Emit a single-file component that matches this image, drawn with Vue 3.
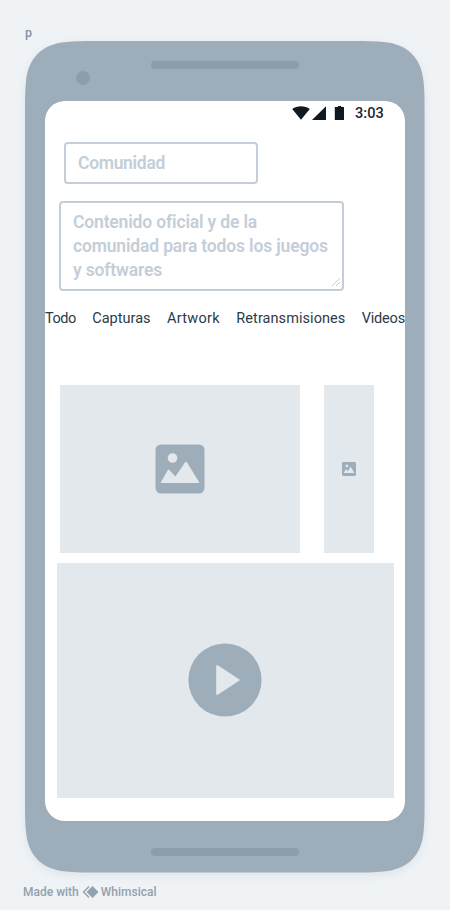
<script setup>
const tabs = ['Todo', 'Capturas', 'Artwork', 'Retransmisiones', 'Videos']
const description = ['Contenido oficial y de la', 'comunidad para todos los juegos', 'y softwares']
</script>

<template>
  <main class="board">
    <div class="frame-name">p</div>

    <section class="phone">
      <svg class="shell" viewBox="0 0 399.6 831.4" aria-hidden="true">
        <path d="M0 76C0 60 0 50 1 41C3 17 17 3 41 1C50 0 60 0 76 0H323.6C339.6 0 349.6 0 358.6 1C382.6 3 396.6 17 398.6 41C399.6 50 399.6 60 399.6 76V755.4C399.6 771.4 399.6 781.4 398.6 790.4C396.6 814.4 382.6 828.4 358.6 830.4C349.6 831.4 339.6 831.4 323.6 831.4H76C60 831.4 50 831.4 41 830.4C17 828.4 3 814.4 1 790.4C0 781.4 0 771.4 0 755.4Z" fill="#9eadba" />
      </svg>
      <header class="bezel-top">
        <span class="camera"></span>
        <span class="speaker"></span>
      </header>

      <div class="screen">
        <div class="status">
          <svg width="54" height="16" viewBox="0 0 54 16" aria-hidden="true">
            <g fill="#101820">
              <path d="M0.2 3.9C5.3 0.2 12.7 0.2 17.8 3.9L9 14.8Z" />
              <path d="M34 1.2V15H20Z" />
              <path d="M42.8 1.9H46V1.1H49.2V1.9H52V15H42.8Z" />
            </g>
          </svg>
          <span class="clock">3:03</span>
        </div>

        <div class="field title-field"><span>Comunidad</span></div>

        <div class="field text-field">
          <span v-for="line in description" :key="line">{{ line }}</span>
          <svg class="grip" width="10" height="10" viewBox="0 0 10 10" aria-hidden="true">
            <path d="M1 9L9 1M5 9L9 5" fill="none" stroke="#c3ced8" stroke-width="1" />
          </svg>
        </div>

        <nav class="tabs">
          <span v-for="tab in tabs" :key="tab" :class="tab.toLowerCase()">{{ tab }}</span>
        </nav>

        <div class="pictures">
          <div class="placeholder wide">
            <svg width="50" height="50" viewBox="0 0 50 50" aria-hidden="true">
              <rect x=".5" y=".5" width="49" height="49" rx="5.5" fill="#9eadba" />
              <circle cx="17.5" cy="14" r="4.8" fill="#e2e8ec" />
              <path d="M6 38L12.7 26.2Q13.5 25 14.5 26.2L20.4 32.6L30.1 18.3Q31 17 31.9 18.3L44 38Q44.5 39 43.5 39H6.5Q5.5 39 6 38Z" fill="#e2e8ec" />
            </svg>
          </div>
          <div class="placeholder narrow">
            <svg width="14" height="14" viewBox="0 0 50 50" aria-hidden="true">
              <rect width="50" height="50" rx="5" fill="#9eadba" />
              <circle cx="17.5" cy="14" r="5" fill="#e2e8ec" />
              <path d="M6 39L14 25L20.4 33L31 17.2L44.5 39Z" fill="#e2e8ec" />
            </svg>
          </div>
        </div>

        <div class="placeholder video">
          <svg width="74" height="74" viewBox="0 0 74 74" aria-hidden="true">
            <circle cx="37" cy="37" r="36.6" fill="#9eadba" />
            <path d="M29.2 23L50.6 37L29.2 51Z" fill="#e2e8ec" stroke="#e2e8ec" stroke-width="2" stroke-linejoin="round" />
          </svg>
        </div>
      </div>

      <footer class="bezel-bottom"><span class="speaker"></span></footer>
    </section>

    <div class="credit">
      <span class="made">Made with</span>
      <svg width="18" height="14" viewBox="0 0 18 14" aria-hidden="true">
        <path d="M7 1.6L1.6 7L7 12.4" fill="none" stroke="#93a1ae" stroke-width="1.4" />
        <path d="M10.5 1L16.5 7L10.5 13L4.5 7Z" fill="#93a1ae" />
      </svg>
      <span class="brand">Whimsical</span>
    </div>
  </main>
</template>

<style>
body {
  background: #eff3f6;
}
</style>

<style scoped>
.board {
  box-sizing: border-box;
  width: 450px;
  height: 910px;
  padding: 26px 0 0 25px;
  overflow: hidden;
  background: #eff3f6;
  font-family: Roboto, "Liberation Sans", sans-serif;
}
.frame-name {
  height: 15px;
  line-height: 14px;
  font-size: 12.5px;
  font-weight: 500;
  color: #8292a2;
}
.phone {
  position: relative;
  width: 399.6px;
  height: 831.4px;
}
.shell {
  position: absolute;
  inset: 0;
  width: 399.6px;
  height: 831.4px;
  overflow: visible;
  filter: drop-shadow(0 3px 4px rgba(60, 80, 100, 0.09));
}
.bezel-top {
  position: relative;
  display: flex;
  height: 60px;
}
.camera {
  width: 14px;
  height: 14px;
  margin: 30px 0 0 51px;
  border-radius: 50%;
  background: #8e9dab;
}
.speaker {
  width: 148px;
  height: 8px;
  border-radius: 4px;
  background: #8e9dab;
}
.bezel-top .speaker {
  margin: 20px 0 0 61px;
}
.screen {
  position: relative;
  width: 360px;
  height: 719.5px;
  margin-left: 20px;
  border-radius: 20px;
  background: #fff;
  overflow: hidden;
}
.status {
  display: flex;
  height: 24px;
  padding: 4px 21px 0 247px;
  box-sizing: border-box;
}
.clock {
  margin-left: 9px;
  font-size: 14.5px;
  line-height: 17px;
  font-weight: 500;
  letter-spacing: 0.1px;
  color: #202632;
}
.field {
  box-sizing: border-box;
  border: 2px solid #c3ced8;
  border-radius: 4px;
  color: #c3ced8;
  font-size: 17.5px;
  line-height: 24px;
  font-weight: 600;
  letter-spacing: -0.16px;
  white-space: nowrap;
}
.title-field {
  width: 194px;
  height: 42px;
  margin: 17px 0 0 19px;
  padding: 7px 12px;
  letter-spacing: -0.3px;
}
.text-field {
  position: relative;
  display: flex;
  flex-direction: column;
  width: 285px;
  height: 90px;
  margin: 17px 0 0 14px;
  padding: 7px 12px;
}
.grip {
  position: absolute;
  right: 1px;
  bottom: 2px;
}
.tabs {
  display: flex;
  justify-content: space-between;
  height: 24px;
  margin-top: 16px;
  font-size: 14.5px;
  line-height: 24px;
  color: #2c3b49;
  white-space: nowrap;
}
.todo {
  letter-spacing: -0.45px;
}
.artwork {
  letter-spacing: 0.3px;
}
.retransmisiones {
  letter-spacing: 0.06px;
}
.videos {
  letter-spacing: -0.2px;
}
.pictures {
  display: flex;
  gap: 24px;
  height: 168px;
  margin: 54px 0 0 15px;
}
.placeholder {
  display: flex;
  align-items: center;
  justify-content: center;
  background: #e2e8ec;
}
.wide {
  width: 240px;
}
.narrow {
  width: 50px;
}
.video {
  box-sizing: border-box;
  width: 337px;
  height: 234.7px;
  margin: 10px 0 0 12px;
  padding: 0 1px 1px 0;
}
.bezel-bottom {
  position: relative;
  padding: 27.9px 0 0 126px;
}
.bezel-bottom .speaker {
  display: block;
}
.credit {
  display: flex;
  align-items: center;
  height: 14px;
  margin: 12.6px 0 0 -2px;
  font-size: 12px;
  font-weight: 500;
  line-height: 14px;
  color: #93a1ae;
}
.credit svg {
  margin: 0 1px 0 3px;
}
</style>
